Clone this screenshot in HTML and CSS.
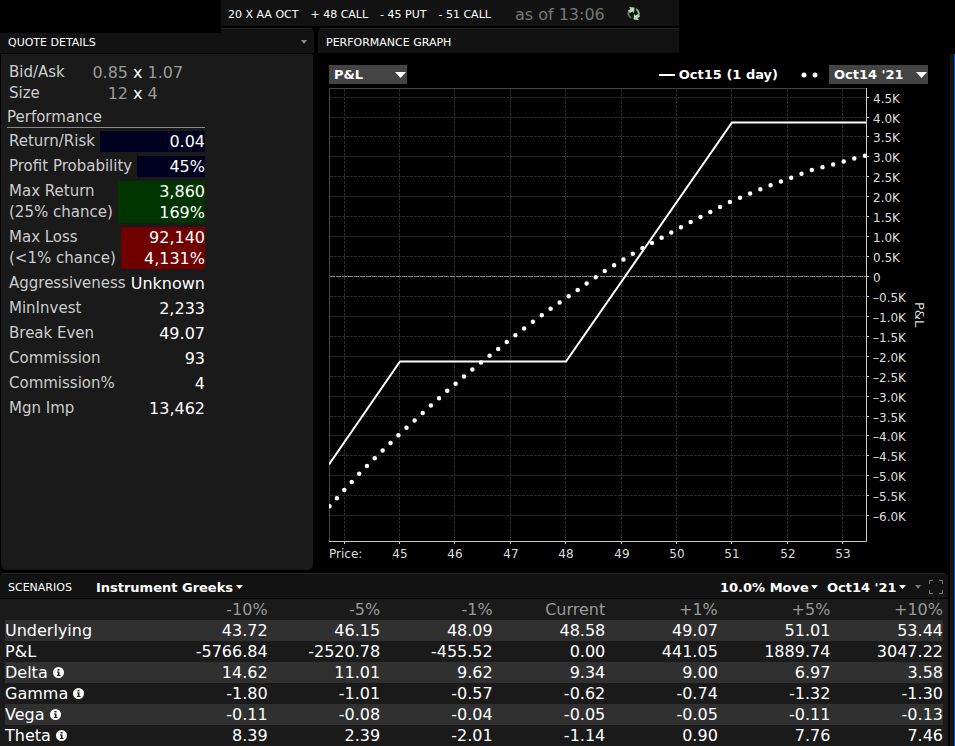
FILE: index.html
```
<!DOCTYPE html>
<html lang="en">
<head>
<meta charset="utf-8">
<title>Performance Profile</title>
<link rel="stylesheet" href="styles.css">
</head>
<body>
<div class="app">
<header class="titlebar">
  <div class="strategy"><span>20 X AA OCT</span><span>+ 48 CALL</span><span>- 45 PUT</span><span>- 51 CALL</span></div>
  <span class="as-of">as of 13:06</span>
  <button class="refresh" aria-label="Refresh">
    <svg width="16" height="16" viewBox="0 0 16 16" fill="none" stroke-width="2">
      <path d="M5 12Q1 9 3 5" stroke="#54775a"/><path d="M3 1L8.500 1.500L8 7L6.500 5.500L4 7L2 4.500L4.500 3Z" fill="#b4d8b4"/>
      <path d="M10 3Q14 6 12.500 10" stroke="#7fa884"/><path d="M13 14L7.500 13.500L8 8L9.500 9.500L12 8L14 10.500L11.500 12Z" fill="#b4d8b4"/>
    </svg>
  </button>
</header>

<main class="panels">
  <section class="quote">
    <h2 class="panel-head quote-head">QUOTE DETAILS
      <svg class="caret" width="6" height="4" viewBox="0 0 6 4"><path d="M0 0H6L3 4Z" fill="#888"/></svg>
    </h2>
    <div class="quote-body">
      <dl class="market">
        <dt>Bid/Ask</dt><dd class="bid">0.85</dd><dd class="by">x</dd><dd>1.07</dd>
        <dt>Size</dt><dd class="bid">12</dd><dd class="by">x</dd><dd>4</dd>
      </dl>
      <h3 class="perf-title">Performance</h3>
      <dl class="perf">
        <div class="stat"><dt>Return/Risk</dt><dd class="navy">0.04</dd></div>
        <div class="stat"><dt>Profit Probability</dt><dd class="navy">45%</dd></div>
        <div class="stat"><dt>Max Return<br>(25% chance)</dt><dd class="green">3,860<br>169%</dd></div>
        <div class="stat"><dt>Max Loss<br>(&lt;1% chance)</dt><dd class="red">92,140<br>4,131%</dd></div>
        <div class="stat"><dt>Aggressiveness</dt><dd>Unknown</dd></div>
        <div class="stat"><dt>MinInvest</dt><dd>2,233</dd></div>
        <div class="stat"><dt>Break Even</dt><dd>49.07</dd></div>
        <div class="stat"><dt>Commission</dt><dd>93</dd></div>
        <div class="stat"><dt>Commission%</dt><dd>4</dd></div>
        <div class="stat"><dt>Mgn Imp</dt><dd>13,462</dd></div>
      </dl>
    </div>
  </section>

  <section class="graph">
    <h2 class="panel-head graph-head">PERFORMANCE GRAPH</h2>
    <div class="graph-tools">
      <div class="picker metric">
        <select aria-label="Metric"><option>P&amp;L</option></select>
        <svg width="11" height="6" viewBox="0 0 11 6"><path d="M0 0H11L5.500 6Z" fill="#fff"/></svg>
      </div>
      <div class="legend">
        <svg width="16" height="2" viewBox="0 0 16 2"><path d="M0 1H16" stroke="#fff" stroke-width="2"/></svg>
        <span>Oct15 (1 day)</span>
      </div>
      <svg class="dots" width="17" height="6" viewBox="0 0 17 6" fill="#fff"><circle cx="3" cy="3" r="2.500"/><circle cx="14" cy="3" r="2.500"/></svg>
      <div class="picker date">
        <select aria-label="Date"><option>Oct14 '21</option></select>
        <svg width="11" height="6" viewBox="0 0 11 6"><path d="M0 0H11L5.500 6Z" fill="#fff"/></svg>
      </div>
    </div>
    <svg class="chart" viewBox="318 84 632 486" role="img" aria-label="P&amp;L by price">
      <clipPath id="plot"><rect x="329" y="88" width="538" height="454"/></clipPath>
      <g id="grid"></g>
      <path class="frame" d="M329.500 541V88.500H866"/>
      <path class="zero" d="M330 276.500H866"/>
      <path class="axis" d="M329 541.500H866.500V88"/>
      <g clip-path="url(#plot)">
        <path class="payoff" d="M329 464.500L400 361.500H566L732 122.500H866"/>
        <path class="curve" d="M329.500 506.300L343.700 490.700L358.700 474.300L374.300 458.700L398 435.700L422.300 413.300L446.700 391.300L471.700 370L497.700 349.300L514.700 335.700L532.300 322.300L550 309.300L568 296.700L586 284L603.800 271.700L613.500 265.700L632.300 254L651.300 243.300L670.700 232.700L690 222.300L709.700 212.300L729.300 202.300L749.300 193.700L769.700 185.700L790.300 178L811 170.300L832.300 164.700L853.700 158.700L866 155.500"/>
      </g>
      <g id="labels"></g>
      <text x="329" y="558">Price:</text>
      <text class="axis-name" transform="translate(915 302) rotate(90)">P&amp;L</text>
    </svg>
  </section>
</main>

<section class="scenarios">
  <div class="panel-head scen-head">
    <h2>SCENARIOS</h2>
    <div class="menu">
      <select aria-label="Scenario view"><option>Instrument Greeks</option></select>
      <svg width="7" height="4" viewBox="0 0 7 4"><path d="M0 0H7L3.500 4Z" fill="#fff"/></svg>
    </div>
    <div class="menu push">
      <select aria-label="Price move"><option>10.0% Move</option></select>
      <svg width="7" height="4" viewBox="0 0 7 4"><path d="M0 0H7L3.500 4Z" fill="#fff"/></svg>
    </div>
    <div class="menu">
      <select aria-label="Scenario date"><option>Oct14 '21</option></select>
      <svg width="7" height="4" viewBox="0 0 7 4"><path d="M0 0H7L3.500 4Z" fill="#fff"/></svg>
    </div>
    <svg class="caret" width="6" height="4" viewBox="0 0 6 4"><path d="M0 0H6L3 4Z" fill="#777"/></svg>
    <button class="expand" aria-label="Expand panel"><svg width="14" height="14" viewBox="0 0 14 14" fill="none" stroke="#777"><path d="M.5 4V.5H4M10 .5H13.500V4M13.500 10V13.500H10M4 13.500H.5V10"/></svg></button>
  </div>
  <div class="table-wrap">
  <table>
    <thead><tr><th></th><th>-10%</th><th>-5%</th><th>-1%</th><th>Current</th><th>+1%</th><th>+5%</th><th>+10%</th></tr></thead>
    <tbody>
      <tr><th>Underlying</th><td>43.72</td><td>46.15</td><td>48.09</td><td>48.58</td><td>49.07</td><td>51.01</td><td>53.44</td></tr>
      <tr><th>P&amp;L</th><td>-5766.84</td><td>-2520.78</td><td>-455.52</td><td>0.00</td><td>441.05</td><td>1889.74</td><td>3047.22</td></tr>
      <tr><th>Delta <svg class="info" viewBox="0 0 11 11"><use href="#info"/></svg></th><td>14.62</td><td>11.01</td><td>9.62</td><td>9.34</td><td>9.00</td><td>6.97</td><td>3.58</td></tr>
      <tr><th>Gamma <svg class="info" viewBox="0 0 11 11"><use href="#info"/></svg></th><td>-1.80</td><td>-1.01</td><td>-0.57</td><td>-0.62</td><td>-0.74</td><td>-1.32</td><td>-1.30</td></tr>
      <tr><th>Vega <svg class="info" viewBox="0 0 11 11"><use href="#info"/></svg></th><td>-0.11</td><td>-0.08</td><td>-0.04</td><td>-0.05</td><td>-0.05</td><td>-0.11</td><td>-0.13</td></tr>
      <tr><th>Theta <svg class="info" viewBox="0 0 11 11"><use href="#info"/></svg></th><td>8.39</td><td>2.39</td><td>-2.01</td><td>-1.14</td><td>0.90</td><td>7.76</td><td>7.46</td></tr>
    </tbody>
  </table>
  </div>
</section>
</div>
<svg class="defs" width="0" height="0"><defs><g id="info"><circle cx="5.500" cy="5.500" r="5.500" fill="#fff"/><path d="M4.500 2H6.500V3.500H4.500ZM4 4.500H6.500V8H7.500V9H4V8H4.800V5.500H4Z" fill="#1a1a1a"/></g></defs></svg>
<script src="chart.js"></script>
</body>
</html>
```
FILE: styles.css
```
* { box-sizing: border-box; }
body {
  margin: 0;
  background: #000;
  color: #fff;
  font-family: "DejaVu Sans", Verdana, sans-serif;
  font-size: 16px;
  line-height: 21px;
}
h2, h3, dl, dd { margin: 0; font-weight: normal; }
button, select {
  appearance: none;
  border: 0;
  margin: 0;
  padding: 0;
  background: none;
  color: inherit;
  font: inherit;
}
svg { display: block; flex: none; }

/* The window's dark gutter and blue edge run down the right side */
.app {
  min-height: 100vh;
  padding-right: 5px;
  overflow: hidden;
  background:
    linear-gradient(#0058d8, #0058d8) right 0 top 54px / 1px 100% no-repeat,
    linear-gradient(#151515, #151515) right 2px top 54px / 3px 100% no-repeat;
}

.titlebar {
  display: flex;
  align-items: center;
  height: 26px;
  margin: 0 271px 2px 221px;
  padding: 2px 7px 0;
  background: #121212;
  white-space: nowrap;
}
.strategy { display: flex; gap: 12px; font-size: 11px; }
.as-of { margin-left: 24px; color: #777; }
.refresh { margin-left: 21px; }

.panel-head {
  display: flex;
  align-items: center;
  height: 25px;
  padding: 2px 8px 0;
  background: #121212;
  border-top: 1px solid #262626;
  font-size: 11px;
  border-radius: 5px 5px 0 0;
}
.quote-head { position: relative; }
.quote-head::before {
  content: "";
  position: absolute;
  top: -1px;
  left: 0;
  width: 221px;
  height: 5px;
  background: #000;
}
.quote .caret { margin-left: auto; margin-right: -1px; }

.panels {
  display: grid;
  grid-template-columns: 314px minmax(0, 1fr);
  column-gap: 4px;
}
.quote { display: flex; flex-direction: column; }
.quote-body {
  flex: 1;
  margin: 1px 1px 0;
  padding: 8px 6px;
  background: #1a1a1a;
  border-radius: 0 0 5px 5px;
}
.market {
  display: grid;
  grid-template-columns: 71px 48px auto 1fr;
  padding-left: 2px;
  color: #999;
}
.market .bid { text-align: right; }
.market .by { padding: 0 5px; color: #fff; }
dt, .perf-title { color: #ccc; font-size: 15px; }
.perf-title { width: 198px; margin-top: 4px; border-bottom: 1px solid #888; line-height: 19px; }
.perf { display: flex; flex-direction: column; gap: 4px; width: 198px; padding: 3px 0 0 2px; }
.stat { display: flex; gap: 5px; white-space: nowrap; }
.stat dd { flex: 1; text-align: right; }
.navy { background: #000020; }
.green { background: #003500; }
.red { background: #700000; }

.graph-head { margin-right: 271px; border-radius: 5px 0 0 0; }
.graph-tools {
  display: flex;
  align-items: center;
  margin: 12px 22px 0 11px;
  font-size: 13px;
  font-weight: bold;
  line-height: 19px;
}
.picker, .menu { display: grid; align-items: center; }
.picker > *, .menu > * { grid-area: 1 / 1; }
.picker svg, .menu svg { justify-self: end; pointer-events: none; }
.picker { background: #444; }
.picker svg { margin-right: 1px; }
.picker select { height: 19px; padding-left: 5px; width: 100%; }
.metric { width: 78px; }
.date { width: 99px; }
.legend { display: flex; align-items: center; gap: 4px; margin-left: auto; }
.dots { margin: 0 11px 0 23px; }

.chart { width: 100%; height: auto; font-size: 12px; fill: #ddd; }
.grid { stroke: #2c2c2c; stroke-dasharray: 3 1; fill: none; }
.frame { stroke: #444; fill: none; }
.axis, .tick { stroke: #ccc; fill: none; }
.zero { stroke: #888; stroke-dasharray: 5 1; }
.payoff { stroke: #fff; stroke-width: 2; fill: none; }
.curve { stroke: #fff; stroke-width: 4.5; stroke-linecap: round; stroke-dasharray: 0 11; fill: none; }
.mid { text-anchor: middle; }
.axis-name { font-size: 13px; }

.scenarios { margin-top: 3px; padding-right: 2px; }
.scen-head { height: 26px; padding-right: 5px; border-bottom: 1px solid #000; }
.scen-head h2 { font-size: 11px; margin-right: 24px; }
.menu { margin-right: 9px; font-size: 13px; font-weight: bold; }
.menu select { padding-right: 9px; }
.push { margin-left: auto; }
.expand { margin-left: 8px; }
.table-wrap { padding: 0 5px; background: #1a1a1a; }
table { width: 100%; table-layout: fixed; border-collapse: collapse; }
th, td { width: 12%; padding: 0; text-align: right; font-weight: normal; height: 21px; }
th:first-child { width: 16%; text-align: left; }
thead th { color: #999; }
tbody tr:nth-child(odd) { background: #303030; }
.info { display: inline-block; width: 11px; height: 11px; }
.defs { position: absolute; }
```
FILE: chart.js
```
const NS = "http://www.w3.org/2000/svg";
const add = (parent, tag, attrs, text) => {
  const node = document.createElementNS(NS, tag);
  for (const key in attrs) node.setAttribute(key, attrs[key]);
  if (text) node.textContent = text;
  parent.append(node);
};
const grid = document.getElementById("grid");
const labels = document.getElementById("labels");

// Price axis
for (let price = 44; price <= 53; price++) {
  const x = Math.round(400 + (price - 45) * 55.4) - 0.5;
  add(grid, "path", { class: "grid", d: `M${x} 89V541` });
  add(labels, "path", { class: "tick", d: `M${x} 541V544` });
  if (price > 44) add(labels, "text", { class: "mid", x: x + 0.5, y: 558 }, String(price));
}

// P&L axis, one line per 500
for (let step = 9; step >= -12; step--) {
  const y = Math.round(276 - step * 19.93) + 0.5;
  const name = step === 0 ? "0" : (step < 0 ? "–" : "") + (Math.abs(step) / 2).toFixed(1) + "K";
  if (step !== 0) add(grid, "path", { class: "grid", d: `M330 ${y}H866` });
  add(labels, "path", { class: "tick", d: `M866 ${y}H869` });
  add(labels, "text", { x: 873, y: y + 5 }, name);
}
```
